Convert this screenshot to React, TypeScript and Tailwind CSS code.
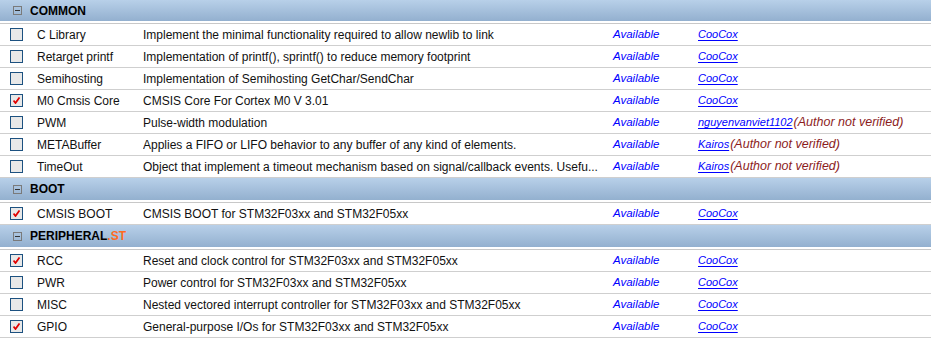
import React from 'react';

type Row = {
  name: string;
  desc: string;
  checked?: boolean;
  author: string;
  verified?: boolean;
};

type Group = {
  title: string;
  suffix?: string;
  first?: boolean;
  rows: Row[];
};

const groups: Group[] = [
  {
    title: 'COMMON',
    first: true,
    rows: [
      { name: 'C Library', desc: 'Implement the minimal functionality required to allow newlib to link', author: 'CooCox', verified: true },
      { name: 'Retarget printf', desc: 'Implementation of printf(), sprintf() to reduce memory footprint', author: 'CooCox', verified: true },
      { name: 'Semihosting', desc: 'Implementation of Semihosting GetChar/SendChar', author: 'CooCox', verified: true },
      { name: 'M0 Cmsis Core', desc: 'CMSIS Core For Cortex M0 V 3.01', checked: true, author: 'CooCox', verified: true },
      { name: 'PWM', desc: 'Pulse-width modulation', author: 'nguyenvanviet1102' },
      { name: 'METABuffer', desc: 'Applies a FIFO or LIFO behavior to any buffer of any kind of elements.', author: 'Kairos' },
      { name: 'TimeOut', desc: 'Object that implement a timeout mechanism based on signal/callback events. Usefu...', author: 'Kairos' },
    ],
  },
  {
    title: 'BOOT',
    rows: [
      { name: 'CMSIS BOOT', desc: 'CMSIS BOOT for STM32F03xx and STM32F05xx', checked: true, author: 'CooCox', verified: true },
    ],
  },
  {
    title: 'PERIPHERAL',
    suffix: '.ST',
    rows: [
      { name: 'RCC', desc: 'Reset and clock control for STM32F03xx and STM32F05xx', checked: true, author: 'CooCox', verified: true },
      { name: 'PWR', desc: 'Power control for STM32F03xx and STM32F05xx', author: 'CooCox', verified: true },
      { name: 'MISC', desc: 'Nested vectored interrupt controller for STM32F03xx and STM32F05xx', author: 'CooCox', verified: true },
      { name: 'GPIO', desc: 'General-purpose I/Os for STM32F03xx and STM32F05xx', checked: true, author: 'CooCox', verified: true },
    ],
  },
];

const CheckBox = ({ checked }: { checked?: boolean }) => (
  <div className="w-[13px] h-[13px] border border-[#1c5180] bg-[#e8e8e8] flex items-center justify-center">
    {checked && (
      <svg width="7" height="7" viewBox="0 0 7 7">
        <path d="M0.5 3.5 L2.5 6 L6.5 0.5" fill="none" stroke="#e00000" strokeWidth="1.8" />
      </svg>
    )}
  </div>
);

const GroupHeader = ({ group }: { group: Group }) => (
  <div className="flex flex-col">
    <div className={`${group.first ? 'h-[21px]' : 'h-[22px]'} bg-gradient-to-b from-[#b8d0e9] to-[#93b0cf] flex items-center pl-[13px]`}>
      <div className="w-[9px] h-[9px] border border-[#7a7a7a] flex items-center justify-center">
        <div className="w-[5px] h-px bg-[#333]" />
      </div>
      <span className="ml-[8px] text-[12px] font-bold text-black">
        {group.title}
        {group.suffix && <span className="text-[#ff6a1f]">{group.suffix}</span>}
      </span>
    </div>
    <div className="h-[2px] bg-white" />
    <div className="h-px bg-[#c8c8c8]" />
  </div>
);

const ItemRow = ({ row }: { row: Row }) => (
  <div className="h-[22px] border-b border-[#cfcfcf] flex items-center text-[12px] text-[#111]">
    <div className="w-[37px] pl-[10px]">
      <CheckBox checked={row.checked} />
    </div>
    <div className="w-[106px] whitespace-nowrap">{row.name}</div>
    <div className="w-[470px] whitespace-nowrap overflow-hidden">{row.desc}</div>
    <div className="w-[85px] italic text-[11.5px] text-[#0000ff]">Available</div>
    <div className="flex items-center whitespace-nowrap italic">
      <span className="text-[#0000ff] text-[11px] underline decoration-[#0000ff] underline-offset-2">{row.author}</span>
      {!row.verified && <span className="text-[#8c1c1c] text-[12.5px] ml-px">(Author not verified)</span>}
    </div>
  </div>
);

export default function App() {
  return (
    <div className="w-[931px] h-[338px] bg-white overflow-hidden" style={{ fontFamily: '"Liberation Sans", Arial, sans-serif' }}>
      {groups.map((g) => (
        <div key={g.title}>
          <GroupHeader group={g} />
          {g.rows.map((r) => (
            <ItemRow key={r.name} row={r} />
          ))}
        </div>
      ))}
    </div>
  );
}
